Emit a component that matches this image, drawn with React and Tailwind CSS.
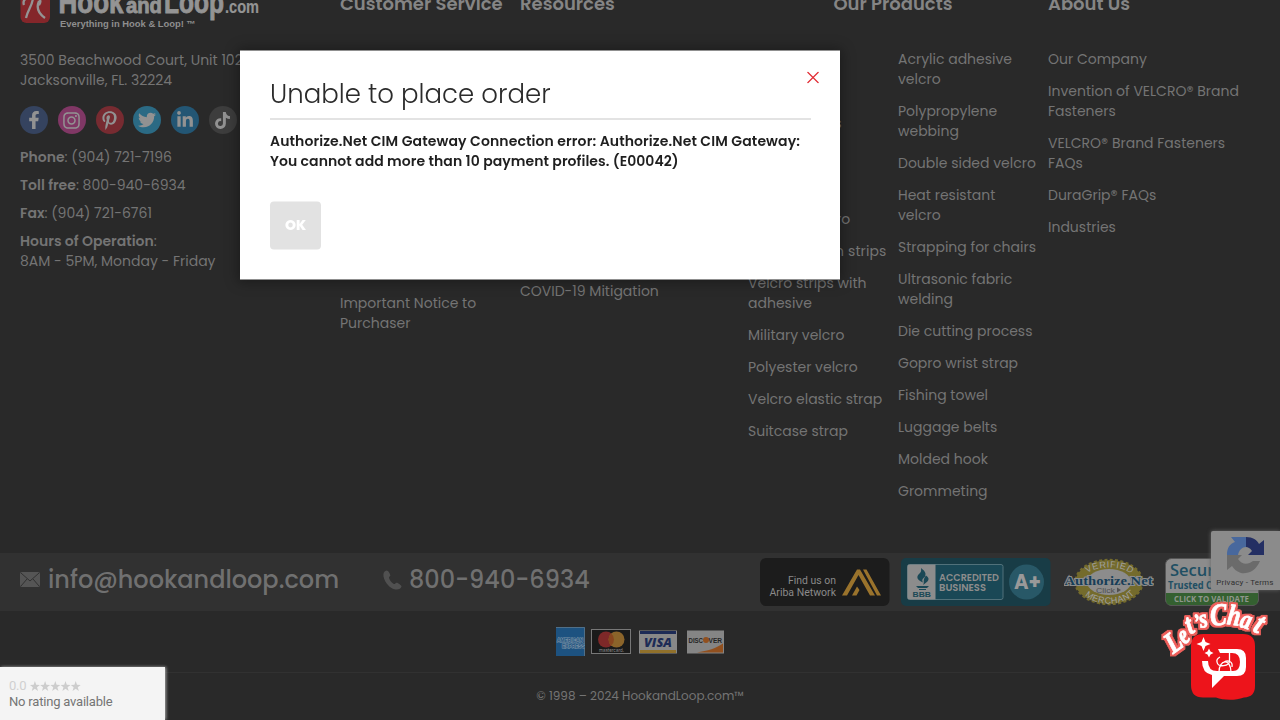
import React from "react";
import { FaFacebookF, FaInstagram, FaPinterestP, FaTwitter, FaLinkedinIn, FaTiktok } from "react-icons/fa";

const SOCIAL = [
  { Icon: FaFacebookF, box: "bg-[#35435f]", size: 18 },
  { Icon: FaInstagram, box: "bg-[#803765]", size: 19 },
  { Icon: FaPinterestP, box: "bg-[#772b31]", size: 19 },
  { Icon: FaTwitter, box: "bg-[#2b6a84]", size: 18 },
  { Icon: FaLinkedinIn, box: "bg-[#235674]", size: 18 },
  { Icon: FaTiktok, box: "bg-[#3d3d3d]", size: 17 },
];

const PRODUCTS_A = [
  ["Velcro tape"],
  ["Hook velcro"],
  ["Velcro straps"],
  ["Velcro dots"],
  ["Velcro ties"],
  ["Outdoor velcro"],
  ["Velcro button strips"],
  ["Velcro strips with", "adhesive"],
  ["Military velcro"],
  ["Polyester velcro"],
  ["Velcro elastic strap"],
  ["Suitcase strap"],
];
const TRACKING = {
  "Velcro straps": "tracking-[0.15px]",
  "Outdoor velcro": "tracking-[-0.15px]",
  "Velcro button strips": "tracking-[0.12px]",
};
const PRODUCTS_B = [
  ["Acrylic adhesive", "velcro"],
  ["Polypropylene", "webbing"],
  ["Double sided velcro"],
  ["Heat resistant", "velcro"],
  ["Strapping for chairs"],
  ["Ultrasonic fabric", "welding"],
  ["Die cutting process"],
  ["Gopro wrist strap"],
  ["Fishing towel"],
  ["Luggage belts"],
  ["Molded hook"],
  ["Grommeting"],
];
const ABOUT = [
  ["Our Company"],
  ["Invention of VELCRO® Brand", "Fasteners"],
  ["VELCRO® Brand Fasteners", "FAQs"],
  ["DuraGrip® FAQs"],
  ["Industries"],
];

function LinkList({ items, className = "" }) {
  return (
    <ul className={`flex flex-col gap-3 whitespace-nowrap ${className}`}>
      {items.map((lines) => (
        <li key={lines[0]} className={TRACKING[lines[0]]}>
          {lines.map((l) => (
            <div key={l} className="h-5">{l}</div>
          ))}
        </li>
      ))}
    </ul>
  );
}

function Heading({ children, className = "" }) {
  return <h3 className={`h-6 whitespace-nowrap text-[18px] leading-6 font-semibold text-[#858585] ${className}`}>{children}</h3>;
}

function Logo() {
  return (
    <svg width="242" height="30" viewBox="0 0 242 30" className="block">
      <rect x="0.5" y="-14" width="29.5" height="37" rx="6" fill="#84262a" />
      <path d="M4 5C2 0 7 -4 14 -3C20 -2 22 1 19 5M13-3C13 5 8 9 6 18M19 1C16 8 19 14 25 18" fill="none" stroke="#949494" strokeWidth="2.3" />
      <g fill="#949494" stroke="#949494" strokeWidth="0.900" fontFamily="'Liberation Sans Narrow','Liberation Sans',sans-serif" fontWeight="700">
        <text x="38.500" y="12.500" fontSize="31" textLength="65" lengthAdjust="spacingAndGlyphs">Hook</text>
        <text x="106" y="12.500" fontSize="22" textLength="36" lengthAdjust="spacingAndGlyphs">and</text>
        <text x="144" y="12.500" fontSize="31" textLength="60" lengthAdjust="spacingAndGlyphs">Loop</text>
        <text x="205" y="13" fontSize="18" textLength="34" lengthAdjust="spacingAndGlyphs" strokeWidth="0.200">.com</text>
      </g>
      <text x="40" y="27" fontSize="8.5" fontWeight="700" fill="#8e8e8e" fontFamily="'Liberation Sans',sans-serif" textLength="136" lengthAdjust="spacingAndGlyphs">Everything in Hook &amp; Loop! ™</text>
    </svg>
  );
}

function Ariba() {
  return (
    <svg width="130" height="48" viewBox="0 0 130 48" className="block">
      <rect width="129.5" height="48" rx="6" fill="#1c1c1c" />
      <g fill="#8a8a8a" fontFamily="Roboto,sans-serif" fontSize="11.500" fontWeight="400">
        <text x="28" y="26" textLength="48" lengthAdjust="spacingAndGlyphs">Find us on</text>
        <text x="9.500" y="38" textLength="66.500" lengthAdjust="spacingAndGlyphs">Ariba Network</text>
      </g>
      <path d="M82 37.500L97 11.500H100L115 37.500H110L98.500 17L87 37.500ZM92 37.500L97 28.500L99.500 32L96.500 37.500ZM103 11.500H106.500L121 37.500H117Z" fill="#9a732c" />
    </svg>
  );
}

function Bbb() {
  return (
    <svg width="150" height="48" viewBox="0 0 150 48" className="block">
      <rect width="149.500" height="48" rx="5" fill="#183c46" />
      <rect x="6.500" y="6.500" width="95.500" height="35" rx="2" fill="#1a4856" stroke="#51717a" />
      <path d="M8.500 6.500H34.500V41.500H8.500Q6.500 41.500 6.500 39.500V8.500Q6.500 6.500 8.500 6.500Z" fill="#8c8c8c" />
      <path d="M20 10C25 14 25 15.500 24 18.500C23 20 20 21 22 24.500C16 22 15 19 18 16C20 14 20.500 13 20 10ZM25 17.500C30 21 27 23.500 22 27C24 24 21 22.500 25 17.500ZM15 28H28L26 30H17ZM18 31H25V32H18Z" fill="#1a4856" />
      <text x="11.500" y="39" fontSize="8" fontWeight="700" fill="#1a4856" textLength="18.500" lengthAdjust="spacingAndGlyphs" fontFamily="'Liberation Sans',sans-serif">BBB</text>
      <g fill="#8c8c8c" fontFamily="Poppins,sans-serif" fontWeight="600" fontSize="10">
        <text x="38" y="22.500" textLength="60" lengthAdjust="spacingAndGlyphs">ACCREDITED</text>
        <text x="38" y="33" textLength="47" lengthAdjust="spacingAndGlyphs">BUSINESS</text>
      </g>
      <circle cx="125.500" cy="24" r="17.500" fill="#285867" />
      <text x="113" y="31" fontSize="21" fontWeight="700" fill="#999" fontFamily="Poppins,sans-serif" textLength="27" lengthAdjust="spacingAndGlyphs">A+</text>
    </svg>
  );
}

function AuthorizeSeal() {
  return (
    <svg width="90" height="48" viewBox="0 0 90 48" className="block">
      <defs>
        <path id="sealTop" d="M20 20C24 6 66 6 70 20" />
        <path id="sealBottom" d="M16 30C24 51 66 51 74 30" />
      </defs>
      <ellipse cx="45" cy="24" rx="33.500" ry="22" fill="#746b2c" stroke="#746b2c" strokeWidth="2.500" strokeDasharray="3 2.300" />
      <ellipse cx="45" cy="24" rx="22" ry="13" fill="#8c8c8c" />
      <g fill="#a0a0a0" fontFamily="'Liberation Sans',sans-serif" fontSize="9" fontWeight="400">
        <text><textPath href="#sealTop" startOffset="6" textLength="46">VERIFIED</textPath></text>
        <text><textPath href="#sealBottom" startOffset="9" textLength="54">MERCHANT</textPath></text>
      </g>
      <text x="0.5" y="27" fontSize="12" fontWeight="700" fill="#173e58" stroke="#8c8c8c" strokeWidth="2" paintOrder="stroke" fontFamily="'Liberation Serif',serif" textLength="88" lengthAdjust="spacingAndGlyphs">Authorize.Net</text>
      <text x="32" y="34.500" fontSize="7" fill="#505050" fontWeight="400" fontFamily="'Liberation Sans',sans-serif" textLength="19" lengthAdjust="spacingAndGlyphs">Click</text>
      <path d="M53 29.500V34.500L57 32Z" fill="#505050" />
    </svg>
  );
}

function Secure() {
  return (
    <svg width="94" height="48" viewBox="0 0 94 48" className="block">
      <rect x="0.500" y="0.500" width="93" height="47" rx="6" fill="#8c8c8c" stroke="#565656" />
      <path d="M1 35H93V42Q93 47 88 47H6Q1 47 1 42Z" fill="#346030" />
      <g fontFamily="'Open Sans',sans-serif" fill="#204f63">
        <text x="5" y="18" fontSize="16.500" fontWeight="600">Secure</text>
        <text x="3" y="31" fontSize="10" fontWeight="700" textLength="88" lengthAdjust="spacingAndGlyphs">Trusted Commerce</text>
      </g>
      <text x="9" y="44" fontSize="8.500" fontWeight="700" fill="#8f978c" textLength="75" lengthAdjust="spacingAndGlyphs" fontFamily="'Open Sans',sans-serif">CLICK TO VALIDATE</text>
    </svg>
  );
}

function Cards() {
  return (
    <div className="flex items-center justify-center">
      <svg width="29" height="29" viewBox="0 0 29 29">
        <rect width="29" height="29" fill="#1d5280" />
        <path d="M0 .5H28.500V29" fill="none" stroke="#506f88" />
        <g fill="#1d5280" stroke="#7b93a6" strokeWidth="1.200" paintOrder="stroke" fontSize="5.500" fontWeight="700" fontFamily="'Liberation Sans',sans-serif">
          <text x="1" y="15" textLength="26" lengthAdjust="spacingAndGlyphs">AMERICAN</text>
          <text x="6" y="21" textLength="23" lengthAdjust="spacingAndGlyphs">EXPRESS</text>
        </g>
      </svg>
      <svg width="40" height="25" viewBox="0 0 40 25" className="ml-1.5">
        <rect x="0.500" y="0.500" width="39" height="24" fill="#1a1a1a" stroke="#777" />
        <circle cx="15" cy="10.500" r="8" fill="#7e2828" />
        <circle cx="25.500" cy="10.500" r="8" fill="#8b642a" />
        <path d="M20.250 4.500A8 8 0 0 1 20.250 16.500A8 8 0 0 1 20.250 4.500Z" fill="#88451f" />
        <text x="8" y="22.500" fontSize="5" fill="#8a8a8a" textLength="25" lengthAdjust="spacingAndGlyphs" fontFamily="Inter,sans-serif">mastercard.</text>
      </svg>
      <svg width="38" height="24" viewBox="0 0 38 24" className="ml-2">
        <rect width="38" height="23" y="0.500" fill="#888" />
        <rect width="36" height="3" x="1" y="1" fill="#1d2b56" />
        <rect width="36" height="3" x="1" y="20" fill="#91712b" />
        <text x="5" y="17" fontSize="13" fontWeight="800" fontStyle="italic" fill="#1d2b56" textLength="28" lengthAdjust="spacingAndGlyphs" fontFamily="'Open Sans',sans-serif">VISA</text>
      </svg>
      <svg width="37" height="24" viewBox="0 0 37 24" className="ml-2.5">
        <rect width="37" height="23" y="0.500" fill="#858585" />
        <path d="M36 13.500V22.500H10C20 21 30 18 36 13.500Z" fill="#91501f" />
        <circle cx="19" cy="10" r="3" fill="#91501f" />
        <g fontSize="7.500" fontWeight="700" fill="#242424" fontFamily="'Liberation Sans',sans-serif">
          <text x="1.500" y="12.800" textLength="14.500" lengthAdjust="spacingAndGlyphs">DISC</text>
          <text x="21.500" y="12.800" textLength="13.500" lengthAdjust="spacingAndGlyphs">VER</text>
        </g>
      </svg>
    </div>
  );
}

function Recaptcha() {
  return (
    <div className="absolute top-[531px] left-[1211px] flex h-[59px] w-[69px] flex-col items-center overflow-hidden rounded-l-xs bg-[#8b8b8b] pt-[5px] shadow-[0_0_4px_#666]">
      <svg width="38" height="38" viewBox="0 0 38 38">
        <path d="M0 19C0 11 3 8 8 6L4 1H19V11C15 11 12 14 11 19Z" fill="#48689d" />
        <path d="M19 1C26 1 30 4 32 8L37 4V19H21L25 15C23 12 21 11 19 11Z" fill="#242f63" />
        <path d="M0 19H15L11 23C16 30 22 28 26 25H33C29 35 21 38 14 37C9 35 7 33 5 30L0 34Z" fill="#6b6b6b" />
      </svg>
      <div className="mt-[3px] ml-[-1px] text-[8px] leading-[12px] tracking-[0.2px] whitespace-nowrap text-[#303030] [font-family:Roboto,sans-serif]">Privacy - Terms</div>
    </div>
  );
}

const CHAT = [
  ["L", 1179, 650, -36, 30],
  ["e", 1188, 642, -38, 26],
  ["t", 1193, 633, -26, 29],
  ["’", 1199, 629, -15, 22],
  ["s", 1205, 627, -14, 26],
  ["C", 1219, 625, -4, 31],
  ["h", 1233, 625, 8, 29],
  ["a", 1244, 628, 17, 27],
  ["t", 1255, 632, 28, 31],
];

function ChatBadge() {
  return (
    <svg width="115" height="105" viewBox="1157 597 115 105" className="absolute top-[597px] left-[1157px]">
      <defs>
        <filter id="halo" x="-10%" y="-20%" width="120%" height="140%">
          <feMorphology in="SourceAlpha" operator="dilate" radius="2" result="wide" />
          <feGaussianBlur in="wide" stdDeviation="0.4" result="soft" />
          <feFlood floodColor="#f0605b" />
          <feComposite in2="soft" operator="in" result="edge" />
          <feMerge>
            <feMergeNode in="edge" />
            <feMergeNode in="SourceGraphic" />
          </feMerge>
        </filter>
      </defs>
      <path d="M1203 634H1243Q1255 634 1255 646V686Q1255 697 1244 697.500C1234 701 1223 700 1216 697.500H1203Q1191 697.500 1191 685V646Q1191 634 1203 634Z" fill="#ed141b" />
      <path d="M1203.500 637L1205.500 642L1210.500 644L1205.500 646L1203.500 651L1201.500 646L1196.500 644L1201.500 642ZM1209 648.500L1210.500 651.500L1213.500 653L1210.500 654.500L1209 657.500L1207.500 654.500L1204.500 653L1207.500 651.500Z" fill="#fff" />
      <path d="M1218 649H1237Q1246 649 1246 658V667Q1246 676 1237 676H1224L1212 688V675Q1202 673 1202 661H1208Q1208 671 1217 671H1233Q1240 671 1240 662Q1240 653 1232 653H1220Z" fill="#fff" />
      <path d="M1229.500 652V661C1229.500 666 1218 668 1217 662C1216.500 660 1218 658 1220 657M1219 672C1219 659 1231 658 1231 672M1224 662C1228 660 1233 661 1232 667" fill="none" stroke="#fff" strokeWidth="1.300" />
      <g filter="url(#halo)" fontFamily="'Liberation Serif',serif" fontWeight="700" fontStyle="italic" textAnchor="middle" fill="#fff" stroke="#fff" strokeWidth="0.700">
        {CHAT.map(([c, x, y, r, s], i) => (
          <text key={i} transform={`translate(${x} ${y}) rotate(${r}) scale(.8 1)`} fontSize={s}>{c}</text>
        ))}
      </g>
    </svg>
  );
}

function Modal() {
  return (
    <div className="absolute top-[50px] left-[240px] h-[229px] w-[600px] translate-y-[0.5px] bg-white px-[30px] pt-[28px] tracking-normal text-[#1f1f1f] shadow-[0_0_12px_2px_rgba(0,0,0,0.35)] will-change-transform">
      <svg width="12" height="12" viewBox="0 0 12 12" className="absolute top-[21px] right-[21px]">
        <path d="M.5.500L11.500 11.500M11.500.500L.5 11.500" stroke="#e22d35" strokeWidth="1.200" />
      </svg>
      <h1 className="h-[41px] w-[541px] border-b border-[#c8c8c8] text-[26px] leading-[30px] font-light whitespace-nowrap text-[#2b2b2b]">Unable to place order</h1>
      <div className="mt-[11px] text-[14px] leading-5 font-semibold whitespace-nowrap">
        <p className="tracking-[0.11px]">Authorize.Net CIM Gateway Connection error: Authorize.Net CIM Gateway:</p>
        <p className="tracking-[0.05px]">You cannot add more than 10 payment profiles. (E00042)</p>
      </div>
      <button className="mt-[31px] flex h-12 w-[51px] items-center justify-center rounded-[4px] bg-[#e2e2e2] pb-0.5 text-[14px] font-extrabold text-white">OK</button>
    </div>
  );
}

export default function App() {
  return (
    <div className="relative h-[720px] w-[1280px] overflow-hidden bg-[#292929] text-[14px] leading-5 text-[#747474] [font-family:Poppins,Inter,sans-serif]">
      <div className="flex h-[553px]">
        <div className="w-[320px] shrink-0 pl-5">
          <Logo />
          <div className="mt-5 whitespace-nowrap">
            <div>3500 Beachwood Court, Unit 102</div>
            <div>Jacksonville, FL. 32224</div>
          </div>
          <div className="mt-4 flex gap-[9.8px]">
            {SOCIAL.map(({ Icon, box, size }, i) => (
              <div key={i} className={`flex size-7 items-center justify-center rounded-full text-[#929292] ${box}`}>
                <Icon size={size} />
              </div>
            ))}
          </div>
          <div className="mt-[13px] flex flex-col gap-2 whitespace-nowrap">
            <p><b className="font-semibold">Phone</b>: (904) 721-7196</p>
            <p><b className="font-semibold">Toll free</b>: 800-940-6934</p>
            <p><b className="font-semibold">Fax</b>: (904) 721-6761</p>
            <p><b className="font-semibold">Hours of Operation</b>:<br />8AM - 5PM, Monday - Friday</p>
          </div>
        </div>
        <div className="-mt-2 ml-5 w-[180px] shrink-0">
          <Heading>Customer Service</Heading>
          <div className="mt-[277px] whitespace-nowrap">
            <div>Important Notice to</div>
            <div>Purchaser</div>
          </div>
        </div>
        <div className="-mt-2 w-[228px] shrink-0">
          <Heading>Resources</Heading>
          <div className="mt-[265px] whitespace-nowrap">COVID-19 Mitigation</div>
        </div>
        <div className="-mt-2 w-[300px] shrink-0">
          <Heading className="w-[290px] text-center">Our Products</Heading>
          <div className="mt-[33px] flex">
            <LinkList items={PRODUCTS_A} className="w-[150px]" />
            <LinkList items={PRODUCTS_B} />
          </div>
        </div>
        <div className="-mt-2">
          <Heading>About Us</Heading>
          <LinkList items={ABOUT} className="mt-[33px]" />
        </div>
      </div>
      <div className="flex h-[58px] items-center bg-[#313131] pl-5 text-[24px] font-medium whitespace-nowrap text-[#707070]">
        <svg width="20" height="15" viewBox="0 0 20 15" className="-mt-1.5">
          <rect width="20" height="15" rx="2" fill="#555" />
          <path d="M1 1L10 9L19 1M1 14L7 7M19 14L13 7" fill="none" stroke="#313131" />
        </svg>
        <div className="-mt-1 ml-2 w-[335px]">info@hookandloop.com</div>
        <svg width="19" height="20" viewBox="0 0 19 20" className="-mt-1" fill="#505050">
          <path d="M3.500 0.500C1 1 0 3.500 0.500 6.500C2 13 7 18.500 12.500 19.500C15.500 20 18 18.500 18.500 16.500C18.600 15.500 15 12.500 13.500 12.700C12.500 13 12 14.500 10.800 14C8.500 12.800 6.500 10 6 7.800C5.800 6.500 7.500 6.300 7.300 5.200C7 3.500 5.200 0.300 3.500 0.500Z" />
        </svg>
        <div className="-mt-1 ml-[7px] w-[351px]">800-940-6934</div>
        <div className="flex items-center">
          <Ariba />
          <div className="ml-[11px]"><Bbb /></div>
          <div className="ml-[13px]"><AuthorizeSeal /></div>
          <div className="ml-[11px]"><Secure /></div>
        </div>
      </div>
      <div className="flex h-[62px] items-center justify-center border-b border-[#313131]"><Cards /></div>
      <div className="mt-[13px] text-center text-[12px]">© 1998 – 2024 HookandLoop.com™</div>

      <Recaptcha />
      <ChatBadge />
      <div className="absolute top-[667px] left-0 flex h-[53px] w-[165px] flex-col bg-[#f4f4f4] pt-[11px] pl-[9px] text-[13px] leading-4 tracking-[-0.2px] shadow-[1px_0_3px_#aaa] [font-family:Roboto,sans-serif]">
        <div className="flex items-center gap-1 text-[#d0d0d0]">
          <span>0.0</span>
          <svg width="51" height="11" viewBox="0 0 52 11" fill="#cdcdcd">
            {[0, 1, 2, 3, 4].map((i) => (
              <path key={i} transform={`translate(${i * 10.4} 0)`} d="M5 0L6.300 3.700L10.100 3.900L7.100 6.300L8.200 10L5 7.900L1.800 10L2.900 6.300L0 3.900L3.700 3.700Z" />
            ))}
          </svg>
        </div>
        <div className="text-[#757575]">No rating available</div>
      </div>
      <Modal />
    </div>
  );
}
